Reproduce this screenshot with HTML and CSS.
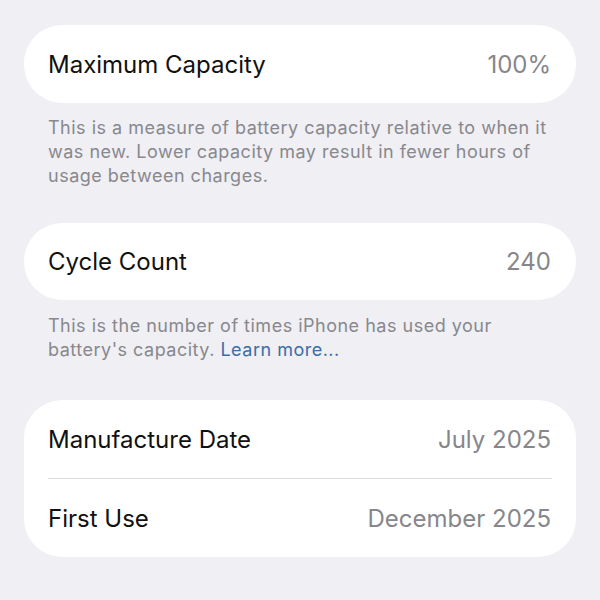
FILE: index.html
```html
<!DOCTYPE html>
<html lang="en">
<head>
<meta charset="utf-8">
<title>Battery Health</title>
<link rel="stylesheet" href="styles.css">
</head>
<body>
<main class="page">
  <section class="card card-first">
    <div class="row">
      <span class="label">Maximum Capacity</span>
      <span class="value">100%</span>
    </div>
  </section>
  <p class="note note-first">This is a measure of battery capacity relative to when it was new. Lower capacity may result in fewer hours of usage between charges.</p>

  <section class="card card-second">
    <div class="row">
      <span class="label">Cycle Count</span>
      <span class="value">240</span>
    </div>
  </section>
  <p class="note note-second">This is the number of times iPhone has used your battery's capacity. <a class="link" href="#">Learn more...</a></p>

  <section class="card card-third">
    <div class="row">
      <span class="label">Manufacture Date</span>
      <span class="value">July 2025</span>
    </div>
    <div class="sep"></div>
    <div class="row">
      <span class="label">First Use</span>
      <span class="value">December 2025</span>
    </div>
  </section>
</main>
</body>
</html>
```

FILE: styles.css
```css
html, body {
  margin: 0;
  padding: 0;
  background: #efeff4;
}
body {
  font-family: Inter, "Noto Sans", "Liberation Sans", sans-serif;
  -webkit-font-smoothing: antialiased;
}
.page {
  width: 600px;
  height: 600px;
  padding-top: 25px;
  box-sizing: border-box;
  display: flex;
  flex-direction: column;
}
.card {
  margin: 0 24px;
  background: #ffffff;
  border-radius: 38px;
  display: flex;
  flex-direction: column;
}
.row {
  height: 78px;
  display: flex;
  align-items: center;
  justify-content: space-between;
  padding: 0 25px 0 24px;
}
.label {
  font-size: 24px;
  color: #111111;
  letter-spacing: 0;
}
.value {
  font-size: 24px;
  color: #86868b;
  letter-spacing: 0;
}
.sep {
  height: 1px;
  background: #dcdce0;
  margin: 0 24px;
}
.note {
  margin: 13px 48px 0 48px;
  font-size: 18px;
  line-height: 24px;
  color: #88888d;
  letter-spacing: 0.5px;
}
.card-second {
  margin-top: 35px;
}
.card-second .row {
  height: 77px;
}
.note-second {
  margin-top: 14px;
}
.card-third {
  margin-top: 38px;
}
.link {
  color: #3b6ea8;
  text-decoration: none;
}
```
